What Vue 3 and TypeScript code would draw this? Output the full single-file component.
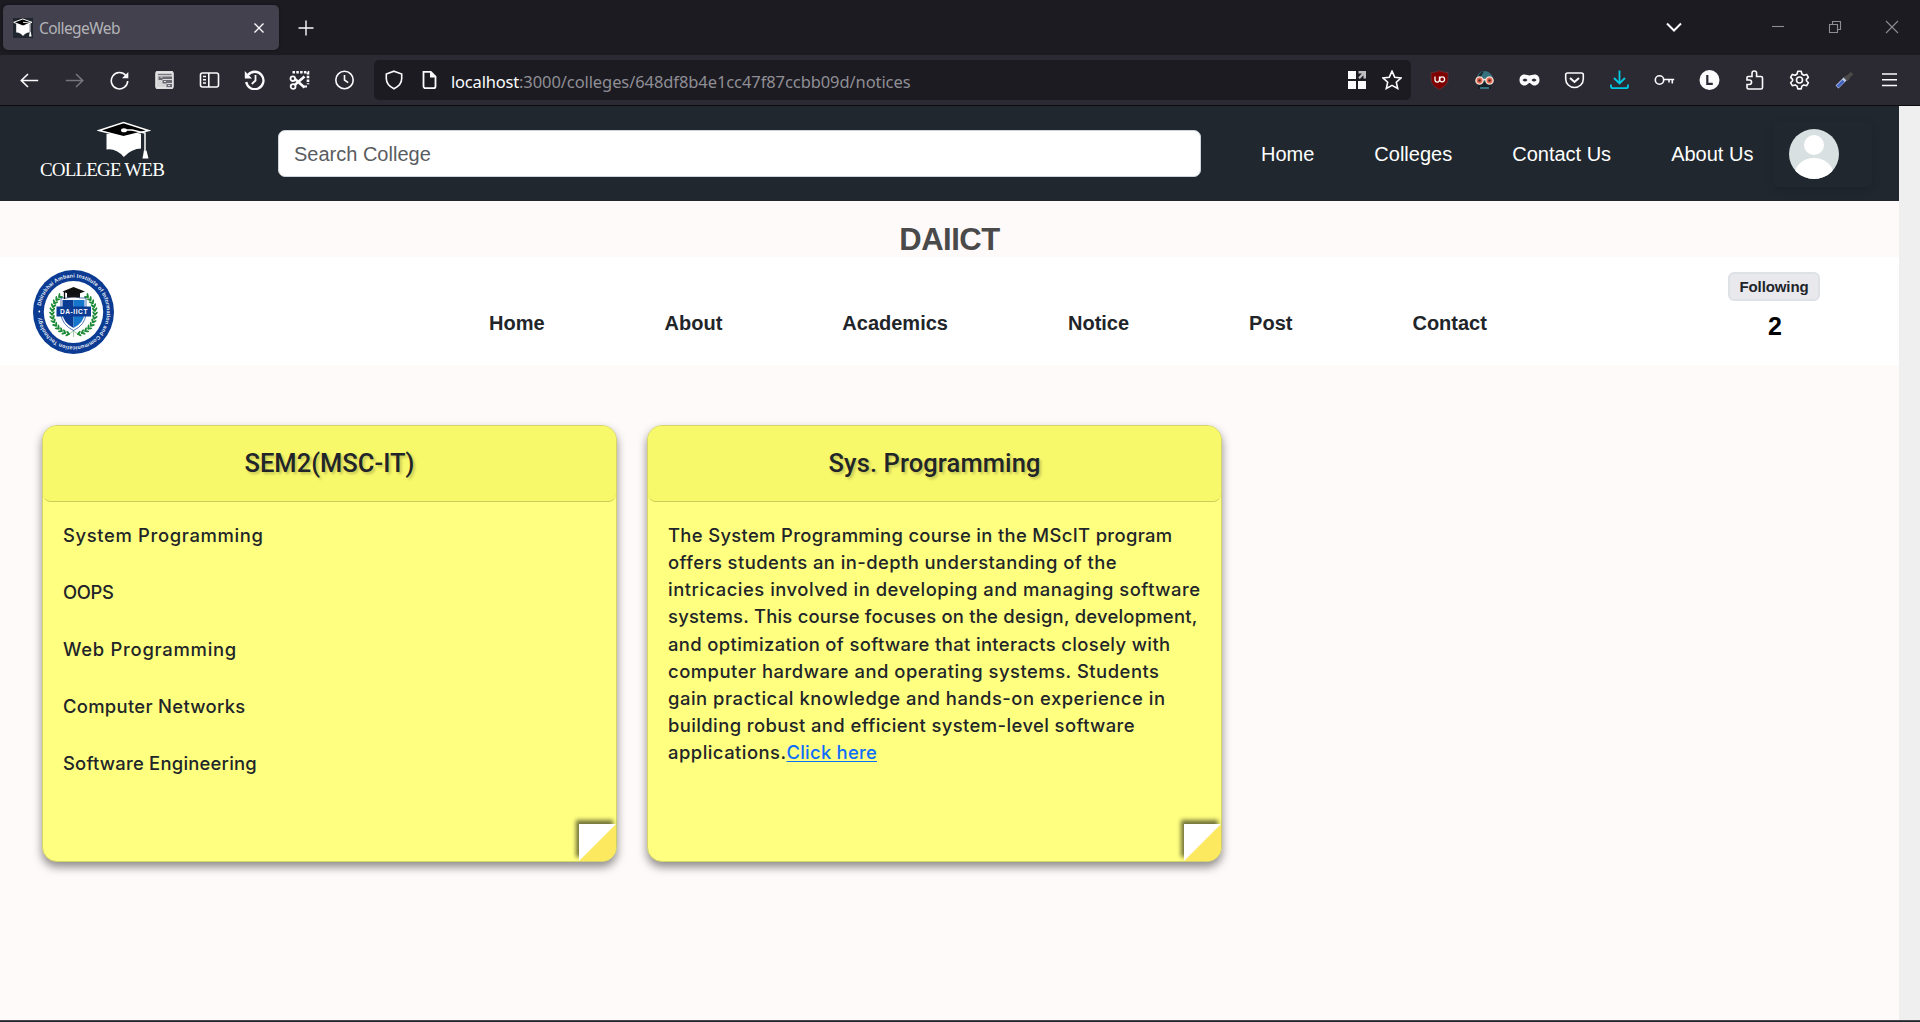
<script setup lang="ts">
import type { Directive } from 'vue'

interface Line {
  text: string
  width: number
}

// Tracks the letters so that a line takes the given width in pixels.
const vFit: Directive<HTMLElement, number> = {
  mounted(el, binding) {
    const natural = el.getBoundingClientRect().width
    const count = (el.textContent ?? '').length
    el.style.letterSpacing = `${(binding.value - natural) / count}px`
  },
}

const siteLinks: string[] = ['Home', 'Colleges', 'Contact Us', 'About Us']
const collegeLinks: string[] = ['Home', 'About', 'Academics', 'Notice', 'Post', 'Contact']

const subjects: Line[] = [
  { text: 'System Programming', width: 200.5 },
  { text: 'OOPS', width: 50.5 },
  { text: 'Web Programming', width: 174 },
  { text: 'Computer Networks', width: 182.5 },
  { text: 'Software Engineering', width: 194 },
]

const course: Line[] = [
  { text: 'The System Programming course in the MScIT program', width: 504.5 },
  { text: 'offers students an in-depth understanding of the', width: 449 },
  { text: 'intricacies involved in developing and managing software', width: 532.5 },
  { text: 'systems. This course focuses on the design, development,', width: 529.5 },
  { text: 'and optimization of software that interacts closely with', width: 502.5 },
  { text: 'computer hardware and operating systems. Students', width: 491.5 },
  { text: 'gain practical knowledge and hands-on experience in', width: 497.5 },
  { text: 'building robust and efficient system-level software', width: 467 },
]

// Leaf positions of the laurel on the college seal.
const leaves = [1, -1].flatMap((side) =>
  Array.from({ length: 13 }, (_, i) => {
    const a = ((-48 + i * 10.5) * Math.PI) / 180
    const turn = side > 0 ? -48 + i * 10.5 : 228 - i * 10.5
    return {
      x: 40.5 + side * 21.5 * Math.cos(a),
      y: 43 + 21.5 * Math.sin(a),
      turn,
      side,
    }
  }),
)
</script>

<template>
  <div class="window">
    <header class="tabbar">
      <div class="tab">
        <svg class="favicon" viewBox="0 0 20 20">
          <rect width="20" height="20" fill="#20272e" />
          <path d="M3.2 6v8.5Q7 14 10 18q3-4 6.500-3.500V6z" fill="#fff" />
          <path d="M.7 4.300 9.800 1l9.200 3.300-9 3.700z" fill="#000" stroke="#fff" stroke-width="1" />
          <path d="M10 4.300 17 5v9" fill="none" stroke="#fff" stroke-width=".9" />
          <path d="M16.800 14h1l.8 4.500h-2.600z" fill="#fff" />
        </svg>
        <span class="tab-title"><span v-fit="81" class="fit">CollegeWeb</span></span>
        <svg class="tab-close" viewBox="0 0 20 20"><path d="M5.500 5.500l9 9M14.500 5.500l-9 9" /></svg>
      </div>
      <svg class="plus" viewBox="0 0 20 20"><path d="M10 2.500v15M2.500 10h15" /></svg>
      <div class="controls">
        <svg class="bright" viewBox="0 0 20 20"><path d="M3 6.500l7 7 7-7" /></svg>
        <svg viewBox="0 0 20 20"><path d="M4 9.500h12" /></svg>
        <svg viewBox="0 0 20 20"><path d="M4.500 7.500h8v8h-8zM7.500 7.500v-3h8v8h-3" /></svg>
        <svg viewBox="0 0 20 20"><path d="M4 4l12 12M16 4 4 16" /></svg>
      </div>
    </header>

    <div class="toolbar">
      <div class="tools">
        <svg viewBox="0 0 20 20"><path d="M18.700 10.500H2M8.500 4l-6.700 6.500L8.500 17" /></svg>
        <svg class="dim" viewBox="0 0 20 20"><path d="M1.300 10.500H18M11.500 4l6.700 6.500-6.700 6.500" /></svg>
        <svg viewBox="0 0 20 20"><path d="M16.300 5.500A8.200 8.200 0 1 0 18.200 11" /><path d="M18.800 2v6.300h-6.300z" fill="#fbfbfe" stroke="none" /></svg>
        <svg viewBox="0 0 20 20">
          <rect x="1.700" y="1.700" width="16.600" height="16.600" rx="1.500" fill="#d4d4d6" />
          <path d="M4 6.500h13.500v10.700h-5.500v-3.700H8V10H4z" fill="#6b6a72" stroke="none" />
          <path d="M3.500 4.500h13.500" stroke="#77767e" stroke-width="1.200" />
          <path d="M8 9.500h10M12 13.500h6M6 7.200h2M9.500 11.500h2M13.500 15.500h2" stroke="#dcdcdd" stroke-width="1" />
          <rect x="1.700" y="1.700" width="16.600" height="16.600" rx="1.500" stroke="#dcdcdd" stroke-width="1.300" />
        </svg>
        <svg viewBox="0 0 20 20"><rect x="1" y="3" width="18" height="14" rx="2" /><path d="M9.300 3v14M3.500 6.500h3M3.500 9.800h3M3.500 13h3" /></svg>
        <svg viewBox="0 0 20 20"><path d="M3.500 5a8.700 8.700 0 1 1-1.800 7" stroke-width="2.300" /><path d="M.3 1v7.500h7.200z" fill="#fbfbfe" stroke="none" /><path d="M11 5v5.500L7.300 14" stroke-width="1.800" /></svg>
        <svg viewBox="0 0 20 20">
          <path d="M3 2.200h15.500v12" stroke-width="2.600" stroke-dasharray="2.500 1.300" />
          <path d="M15 6.500 5.500 14.700M5.500 9l9.500 8.500" stroke-width="2.600" />
          <circle cx="3.300" cy="8.700" r="2.300" stroke-width="1.800" /><circle cx="3.600" cy="16.500" r="2.400" stroke-width="1.800" />
          <path d="M14.500 16.500h3" stroke-width="2" />
        </svg>
        <svg viewBox="0 0 20 20"><circle cx="10" cy="10" r="8.700" /><path d="M10 5v5l3.700 2.700" /></svg>
      </div>

      <div class="urlbar">
        <svg viewBox="0 0 20 20"><path d="M10 1.200 17.700 4v4.500c0 4.500-3.500 8.200-7.700 10.300C5.800 16.700 2.300 13 2.300 8.500V4z" /></svg>
        <svg viewBox="0 0 20 20"><path d="M4.500 1.800h7.300l4.700 4.700v9.700a2 2 0 0 1-2 2h-8a2 2 0 0 1-2-2z" stroke-width="1.800" /><path d="M11 1.500 17 7.500h-6z" fill="#fbfbfe" stroke="none" /></svg>
        <span class="url"><b v-fit="68" class="fit">localhost</b><span v-fit="391.500" class="fit">:3000/colleges/648df8b4e1cc47f87ccbb09d/notices</span></span>
        <svg class="grid" viewBox="0 0 20 20">
          <path d="M1 1h8v8H1zM1 11h8v8H1zM11 11h8v8h-8z" fill="#fbfbfe" stroke="none" />
          <path d="M11.500 1H19v7.500h-2.500V5.300l-3.700 3.700-1.600-1.600 3.700-3.900h-3.400z" fill="#bebec0" stroke="none" />
        </svg>
        <svg viewBox="0 0 20 20"><path d="m10 1.200 2.700 6 6.400.7-4.800 4.300 1.400 6.300L10 15.300l-5.700 3.200 1.400-6.300L.9 7.900l6.400-.7z" /></svg>
      </div>

      <div class="tools">
        <svg viewBox="0 0 20 20"><path d="M10 .5c2.500 1.500 5.500 2 8.500 2v6.500c0 5-4 8-8.500 10.500C5.500 17 1.500 14 1.500 9V2.500c3 0 6-.5 8.500-2z" fill="#800000" stroke="#5d4048" stroke-width=".7" /><path d="M5.500 6.500v3.300a2.200 2.200 0 0 0 4.500 0V6.500" stroke-width="1.300" /><circle cx="12.600" cy="9.300" r="2.500" stroke-width="1.300" /></svg>
        <svg viewBox="0 0 20 20">
          <path d="M2 9.500C2.500 4 6 1 10 1s8 3 8.500 8.500V13H2z" fill="#36717f" stroke="none" /><path d="M3.500 7C5 3 7 1.700 9.500 1.300L6 7.500z" fill="#19272f" stroke="none" />
          <path d="M3.500 11.500h13V19h-13z" fill="#17212a" stroke="none" /><path d="M5.500 18h9" stroke="#36717f" stroke-width="2" />
          <circle cx="5" cy="10.500" r="3.600" fill="#e8654d" stroke="#f3dfd5" stroke-width="1.400" /><circle cx="15" cy="10.500" r="3.600" fill="#e8654d" stroke="#f3dfd5" stroke-width="1.400" /><path d="M8.500 9.500h3" stroke="#f3dfd5" stroke-width="1.500" /><circle cx="5" cy="10.500" r="1.300" fill="#4a2a28" stroke="none" /><circle cx="15" cy="10.500" r="1.300" fill="#4a2a28" stroke="none" />
        </svg>
        <svg viewBox="0 0 20 20"><path fill-rule="evenodd" d="M5 4.500c2 0 3.500 1 5 1s3-1 5-1c3.500 0 5 2.500 5 5.500s-2 5.500-5 5.500-3.500-2.500-5-2.500-2 2.500-5 2.500S0 13 0 10s1.500-5.500 5-5.500zM3 10q2.500 3 5 0-2.500-3-5 0zm9 0q2.500 3 5 0-2.500-3-5 0z" fill="#fbfbfe" stroke="none" /></svg>
        <svg viewBox="0 0 20 20"><path d="M3 3h14a1.800 1.800 0 0 1 1.800 1.800V9A8.800 8.500 0 0 1 1.200 9V4.800A1.800 1.800 0 0 1 3 3z" /><path d="m5.500 8 4.500 4 4.500-4" stroke-width="2" /></svg>
        <svg class="cyan" viewBox="0 0 20 20"><path d="M10 .5v13M4.500 8l5.500 5.500L15.500 8M1.500 14.500v1.700a2 2 0 0 0 2 2h13a2 2 0 0 0 2-2v-1.700" stroke-width="1.800" /></svg>
        <svg viewBox="0 0 20 20"><circle cx="5" cy="10" r="4.200" /><path d="M9.200 9.500h10.500M17.800 9.500v4M14.500 9.500v3" /></svg>
        <svg viewBox="0 0 20 20"><circle cx="10" cy="10" r="10" fill="#fbfbfe" stroke="none" /><path d="M7.800 5v8.900H13.300" stroke="#2b2a33" stroke-width="2.200" /></svg>
        <svg viewBox="0 0 20 20"><path d="M3.500 6.500h4V3.300a2.300 2.300 0 0 1 4.600 0v3.200h4.400a1.500 1.500 0 0 1 1.500 1.500v9.500a1.500 1.500 0 0 1-1.500 1.500H4a1.500 1.500 0 0 1-1.500-1.500v-3h2.300a2.200 2.200 0 0 0 0-4.500H2.500V7.500a1 1 0 0 1 1-1z" /></svg>
        <svg viewBox="0 0 20 20"><path d="m8.300 1.200h3.400l.7 2.800 2 1.200 2.800-.8 1.700 3-2 2v1.300l2 2-1.700 3-2.800-.8-2 1.200-.7 2.800H8.300l-.7-2.800-2-1.200-2.800.8-1.700-3 2-2V9.400l-2-2 1.700-3 2.800.8 2-1.200z" stroke-linejoin="round" /><circle cx="10" cy="10" r="3" /></svg>
        <svg viewBox="0 0 20 20"><path d="m2.500 17 8.500-8.500" stroke="#c3cce6" stroke-width="4" /><path d="m3 16.700 6-6" stroke="#4263c2" stroke-width="3" /><path d="m10.500 6.500 3.500 3.500M12 8.500 17.500 3" stroke="#4b4a48" stroke-width="3.600" /></svg>
        <svg viewBox="0 0 20 20"><path d="M2.500 4h15M2.500 9.800h15M2.500 15.500h15" /></svg>
      </div>
    </div>

    <div class="viewport">
      <main class="page">
        <nav class="site-nav">
          <div class="brand">
            <svg class="cap" viewBox="0 0 54 38">
              <path d="M9.500 13h36v14.500Q35 27 26.800 36 19 27 9.500 28.500z" fill="#fff" />
              <path d="M45.500 12v16" stroke="#20272e" stroke-width="3" />
              <path d="M2 9.500 26.500 1.500 51.500 9.500 26.500 15.700z" fill="#000" stroke="#fff" stroke-width="1.500" />
              <path d="M27 9h8l13 3v17" fill="none" stroke="#fff" stroke-width="1.500" />
              <ellipse cx="27" cy="9.200" rx="3" ry="2" fill="#fff" />
              <path d="m47 29 2.500.5 2 8h-6z" fill="#fff" />
            </svg>
            <span class="brand-name"><span v-fit="124" class="fit">COLLEGE WEB</span></span>
          </div>
          <input class="search" type="text" placeholder="Search College" />
          <div class="site-links">
            <a v-for="link in siteLinks" :key="link">{{ link }}</a>
          </div>
          <div class="account">
            <svg viewBox="0 0 50 50">
              <clipPath id="avatar-clip"><circle cx="25" cy="25" r="25" /></clipPath>
              <g clip-path="url(#avatar-clip)">
                <rect width="50" height="50" fill="#d8e0e2" />
                <circle cx="25" cy="16" r="10" fill="#fff" />
                <ellipse cx="25" cy="46" rx="19.500" ry="17" fill="#fff" />
              </g>
            </svg>
          </div>
        </nav>

        <h1 class="college-name">DAIICT</h1>

        <section class="college-bar">
          <svg class="seal" viewBox="0 0 81 84">
            <ellipse cx="40.500" cy="42" rx="40.500" ry="42" fill="#0b3b92" />
            <ellipse cx="40.500" cy="42" rx="29.700" ry="31" fill="#fff" />
            <path id="seal-ring" d="M7.200 42A33.300 34.500 0 0 1 73.800 42 33.300 34.500 0 0 1 7.200 42" fill="none" />
            <text class="seal-text"><textPath href="#seal-ring" startOffset="6" textLength="201">Dhirubhai Ambani Institute of Information and Communication Technology</textPath></text>
            <circle cx="6.300" cy="41.500" r=".9" fill="#fff" />
            <g v-for="(leaf, i) in leaves" :key="i" :transform="`translate(${leaf.x} ${leaf.y}) rotate(${leaf.turn})`" fill="#1c8a35">
              <ellipse cx="-1.500" cy="0" rx="2.500" ry="1" :transform="`rotate(${leaf.side * 50})`" />
              <ellipse cx="1.500" cy="0" rx="2.500" ry="1" :transform="`rotate(${leaf.side * -50})`" />
            </g>
            <path d="M40.500 60v7M36 64l4.500-3 4.500 3" fill="none" stroke="#6aa877" stroke-width=".6" />
            <path d="M28 28q6 1 12.500-2 6.500 3 12.500 2v16q-1 11-12.500 16.500Q29 55 28 44z" fill="#fff" stroke="#0b3b92" stroke-width=".7" />
            <path d="M29.500 30h11v28Q30.500 53 29.500 44z" fill="#0b3b92" />
            <path d="M40.500 30h11v14q-1 9-11 14z" fill="#1676cc" />
            <path d="M23.500 36.500h34.500v10H23.500z" fill="#0b3b92" />
            <text class="seal-label" x="40.700" y="43.800" textLength="27.500">DA-IICT</text>
            <path d="M34 22h13v5.500H34z" fill="#15151a" />
            <path d="M29.500 21.500 40.500 17l11.500 4.500-11.500 4z" fill="#111" />
            <path d="M31.500 21v8" stroke="#111" stroke-width="1.300" />
          </svg>
          <div class="college-links">
            <a v-for="link in collegeLinks" :key="link">{{ link }}</a>
          </div>
          <div class="follow">
            <button type="button">Following</button>
            <strong>2</strong>
          </div>
        </section>

        <section class="notices">
          <article class="note">
            <h2><span v-fit="170" class="fit">SEM2(MSC-IT)</span></h2>
            <div class="note-body subjects">
              <p v-for="item in subjects" :key="item.text"><span v-fit="item.width" class="fit">{{ item.text }}</span></p>
            </div>
            <span class="fold"></span>
          </article>
          <article class="note">
            <h2><span v-fit="212" class="fit">Sys. Programming</span></h2>
            <div class="note-body">
              <p v-for="line in course" :key="line.text"><span v-fit="line.width" class="fit">{{ line.text }}</span></p>
              <p><span v-fit="118.500" class="fit">applications.</span><a v-fit="90.500" class="fit link" href="#">Click here</a></p>
            </div>
            <span class="fold"></span>
          </article>
        </section>
      </main>
      <div class="scrollbar"></div>
    </div>
    <div class="window-edge"></div>
  </div>
</template>

<style>
body {
  margin: 0;
  overflow: hidden;
}
</style>

<style scoped>
* {
  box-sizing: border-box;
}
.window {
  width: 1920px;
  height: 1022px;
  display: flex;
  flex-direction: column;
  overflow: hidden;
  background: #1c1b22;
  font-family: "Liberation Sans", Arial, sans-serif;
}
svg {
  display: block;
  flex: none;
}
.fit {
  display: inline-block;
  white-space: pre;
}
.tabbar {
  height: 55px;
  flex: none;
  display: flex;
  align-items: center;
  padding-left: 3px;
}
.tab {
  width: 276px;
  height: 45px;
  display: flex;
  align-items: center;
  padding: 0 10px;
  border-radius: 5px;
  background: #42414d;
  box-shadow: 0 0 3px rgba(0, 0, 0, 0.5);
}
.favicon {
  width: 20px;
  height: 20px;
}
.tab-title {
  margin-left: 6px;
  padding-top: 1px;
  flex: 1;
  color: #b3b3b8;
  font: 15.5px/20px "Noto Sans", sans-serif;
}
.tab-close,
.plus,
.controls svg {
  width: 20px;
  height: 20px;
  fill: none;
  stroke: #fbfbfe;
  stroke-width: 1.4;
}
.plus {
  margin-left: 16.5px;
}
.controls {
  margin-left: auto;
  padding: 0 18px 2px 0;
  display: flex;
  gap: 37px;
}
.controls svg {
  stroke: #8e8d92;
  stroke-width: 1.1;
}
.controls .bright {
  stroke: #fbfbfe;
  stroke-width: 2;
  margin-right: 47px;
}
.toolbar {
  height: 51px;
  flex: none;
  display: flex;
  align-items: center;
  padding: 0 8px 1px 7px;
  background: #2b2a33;
  border-bottom: 1px solid #0c0c0f;
}
.tools {
  display: flex;
}
.tools svg {
  width: 45px;
  height: 20px;
  fill: none;
  stroke: #fbfbfe;
  stroke-width: 1.6;
}
.tools .dim {
  stroke: #76757b;
}
.tools .cyan {
  stroke: #00c8e4;
}
.urlbar {
  flex: 1;
  height: 40px;
  margin: 0 6px 0 7px;
  padding: 0 9px 0 10px;
  display: flex;
  align-items: center;
  border-radius: 5px;
  background: #1c1b22;
}
.urlbar svg {
  width: 20px;
  height: 20px;
  margin-right: 15px;
  fill: none;
  stroke: #fbfbfe;
  stroke-width: 1.6;
}
.urlbar svg:last-child {
  margin-right: 0;
}
.url {
  flex: 1;
  margin-left: -3px;
  padding-top: 4px;
  color: #8f8e94;
  font: 16.5px/22px "Noto Sans", sans-serif;
  white-space: nowrap;
}
.url b {
  color: #fbfbfe;
  font-weight: 400;
}
.viewport {
  height: 914px;
  flex: none;
  display: flex;
}
.page {
  width: 1899px;
  background: #fffafa;
}
.scrollbar {
  flex: 1;
  background: #efefef;
}
.window-edge {
  height: 2px;
  flex: none;
  background: #20262c;
  border-top: 1px solid #45454a;
}
.site-nav {
  height: 95px;
  display: flex;
  align-items: center;
  padding-left: 40px;
  background: #20272e;
}
.brand {
  width: 238px;
  height: 95px;
}
.cap {
  width: 54px;
  height: 38px;
  margin: 15px 0 0 57px;
}
.brand-name {
  display: block;
  color: #fff;
  font: 19px/22px "Liberation Serif", serif;
}
.search {
  width: 923px;
  height: 47px;
  padding: 1px 15px 0;
  border: 1px solid #ced4da;
  border-radius: 7px;
  background: #fff;
  font: 20px "Liberation Sans", Arial, sans-serif;
}
.search::placeholder {
  color: #595c5f;
  opacity: 1;
}
.site-links {
  display: flex;
  gap: 60px;
  margin: 0 20px 0 60px;
  padding-top: 2px;
  color: #fff;
  font-size: 20px;
  white-space: nowrap;
}
.account {
  padding: 8px 33px 8px 16px;
  border-radius: 6px;
  box-shadow: 0 3px 8px rgba(0, 0, 0, 0.14);
}
.account svg {
  width: 50px;
  height: 50px;
}
.college-name {
  height: 56px;
  margin: 0;
  padding-top: 21px;
  color: #4a4a4a;
  font-size: 31px;
  line-height: 36px;
  letter-spacing: -0.5px;
  text-align: center;
}
.college-bar {
  height: 108px;
  display: flex;
  padding: 13px 79px 0 33px;
  background: #fff;
}
.seal {
  width: 81px;
  height: 84px;
}
.seal-text {
  fill: #e9eef8;
  font: bold 5.4px "Liberation Sans", Arial, sans-serif;
}
.seal-label {
  fill: #fff;
  font: bold 6.6px "Liberation Sans", Arial, sans-serif;
  text-anchor: middle;
}
.college-links {
  display: flex;
  gap: 120px;
  margin: 41px 0 0 375px;
  color: #212529;
  font-size: 20px;
  font-weight: 700;
  line-height: 24px;
}
.follow {
  margin: 2px 0 0 auto;
  display: flex;
  flex-direction: column;
  align-items: center;
  width: 92px;
}
.follow button {
  width: 92px;
  height: 29px;
  padding: 0;
  border: 2px solid #dee2e6;
  border-radius: 6px;
  background: #e9e8ed;
  color: #212529;
  font: bold 15px "Liberation Sans", Arial, sans-serif;
  letter-spacing: -0.1px;
}
.follow strong {
  margin: 11px 0 0 2px;
  color: #000;
  font-size: 25px;
  line-height: 28px;
}
.notices {
  display: flex;
  gap: 30px;
  padding: 60px 0 0 42px;
}
.note {
  position: relative;
  width: 575px;
  height: 437px;
  border: 1px solid #d5d56c;
  border-radius: 15px;
  background: #ffff80;
  box-shadow: 0 5px 10px rgba(0, 0, 0, 0.45);
}
.note h2 {
  height: 76px;
  margin: 0;
  border-bottom: 1px solid #cccc56;
  border-radius: 14px 14px 8px 8px;
  background: #f8f96a;
  color: #212529;
  font: 500 25.5px/74px Roboto, sans-serif;
  text-align: center;
  text-shadow: 2px 2px 3px rgba(0, 0, 0, 0.22);
}
.note-body {
  padding: 20px 20px 0;
  color: #212529;
  font: 500 18.4px/27.15px Inter, sans-serif;
}
.note-body p {
  height: 27.15px;
  margin: 0;
  white-space: nowrap;
}
.subjects p {
  height: 57px;
}
.link {
  color: #0d6efd;
  text-decoration: underline;
  text-underline-offset: 2px;
}
.fold {
  position: absolute;
  right: 0;
  bottom: 0;
  width: 37px;
  height: 37px;
  border-bottom-right-radius: 14px;
  background: linear-gradient(135deg, #fff 49.5%, #fde95f 50.5%);
  box-shadow: -3px -4px 4px rgba(0, 0, 0, 0.55);
}
</style>
